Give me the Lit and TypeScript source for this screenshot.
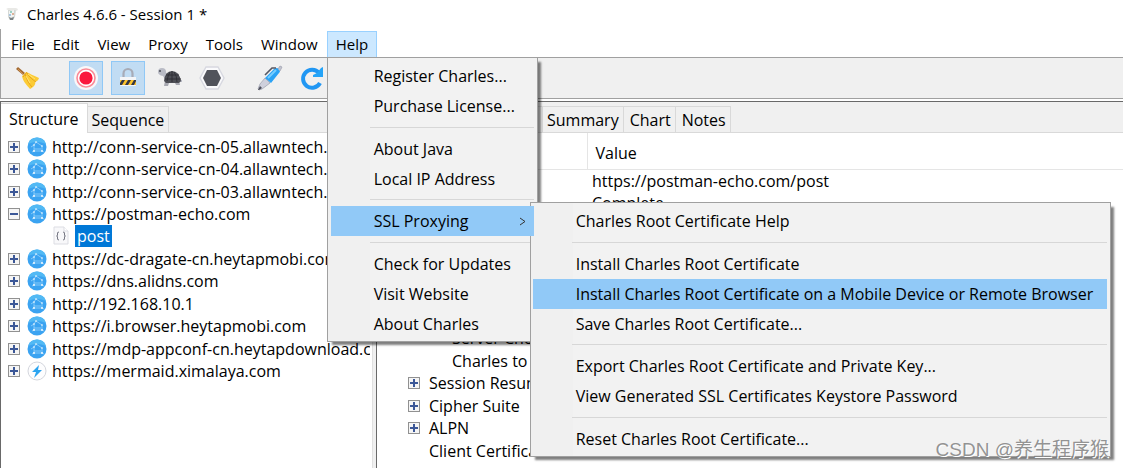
import { LitElement, html, css, svg, nothing } from "lit";
import { customElement, state } from "lit/decorators.js";
import { classMap } from "lit/directives/class-map.js";

type MenuEntry = { label: string; active?: boolean; submenu?: MenuGroup[] };
type MenuGroup = MenuEntry[];
type Host = { url: string; icon?: "globe" | "bolt"; open?: boolean; leaf?: string };
type Row = { name: string; value?: string; level?: number; toggle?: boolean };

const sslMenu: MenuGroup[] = [
  [{ label: "Charles Root Certificate Help" }],
  [
    { label: "Install Charles Root Certificate" },
    { label: "Install Charles Root Certificate on a Mobile Device or Remote Browser", active: true },
    { label: "Save Charles Root Certificate..." },
  ],
  [
    { label: "Export Charles Root Certificate and Private Key..." },
    { label: "View Generated SSL Certificates Keystore Password" },
  ],
  [{ label: "Reset Charles Root Certificate..." }],
];

const helpMenu: MenuGroup[] = [
  [{ label: "Register Charles..." }, { label: "Purchase License..." }],
  [{ label: "About Java" }, { label: "Local IP Address" }],
  [{ label: "SSL Proxying", active: true, submenu: sslMenu }],
  [{ label: "Check for Updates" }, { label: "Visit Website" }, { label: "About Charles" }],
];

const hosts: Host[] = [
  { url: "http://conn-service-cn-05.allawntech.com" },
  { url: "http://conn-service-cn-04.allawntech.com" },
  { url: "http://conn-service-cn-03.allawntech.com" },
  { url: "https://postman-echo.com", open: true, leaf: "post" },
  { url: "https://dc-dragate-cn.heytapmobi.com" },
  { url: "https://dns.alidns.com" },
  { url: "http://192.168.10.1" },
  { url: "https://i.browser.heytapmobi.com" },
  { url: "https://mdp-appconf-cn.heytapdownload.com" },
  { url: "https://mermaid.ximalaya.com", icon: "bolt" },
];

const rows: Row[] = [
  { name: "URL", value: "https://postman-echo.com/post" },
  { name: "Status", value: "Complete" },
  { name: "Response Code", value: "200" },
  { name: "Protocol", value: "HTTP/1.1" },
  { name: "TLS", toggle: true },
  { name: "Protocol", level: 1, toggle: true },
  { name: "Client Supported", level: 2 },
  { name: "Server Chosen", level: 2 },
  { name: "Charles to Client", level: 2 },
  { name: "Session Resumed", level: 1, toggle: true },
  { name: "Cipher Suite", level: 1, toggle: true },
  { name: "ALPN", level: 1, toggle: true },
  { name: "Client Certificates", level: 1 },
];

const appIcon = svg`<svg width="14" height="14" viewBox="0 0 14 14">
  <path d="M3 3h8l-1 7-2 3H5l-2-3z" fill="#d5d9d6"/><path d="M1 2l2-1h8l2 1-1 2-2-1H3z" fill="#e9e9e6"/>
  <path d="M4 4l5-1v6l-3 2-2-2z" fill="#f2f5f3"/><circle cx="6" cy="5" r="1" fill="#7fc4b4"/>
  <circle cx="8" cy="7" r="1" fill="#d59a7c"/><circle cx="5" cy="8" r="1" fill="#8fb4dc"/><path d="M4 10l2 1 3-1-1 3H5z" fill="#7c8386"/></svg>`;

const broom = svg`<svg width="26" height="26" viewBox="0 0 26 26">
  <path d="M1 4l2-2 7 6-2 2z" fill="#a36a32"/><path d="M3 4l5 5" stroke="#cf9250" stroke-width="1"/>
  <path d="M7 11c2-1 3-3 4-4 3 1 8 4 13 6-1 3-2 3-4 4 1 2-1 5-5 7-3-4-7-7-8-13z" fill="#fccb35"/>
  <path d="M10 9c2 6 4 10 7 13M12 8c2 4 6 7 9 9M8 12l4-5" stroke="#e7a51e" fill="none"/>
  <path d="M13 9l7 5M11 11l4 7" stroke="#ffe474" fill="none"/></svg>`;

const record = svg`<svg width="26" height="26" viewBox="0 0 26 26">
  <circle cx="13" cy="13" r="12" fill="#f8f8fa"/><circle cx="13" cy="13" r="9" fill="#fff" stroke="#fb8b98" stroke-width="1.6"/>
  <circle cx="13" cy="13" r="6.600" fill="#fa183d"/></svg>`;

const lock = svg`<svg width="26" height="26" viewBox="0 0 26 26">
  <path d="M8.500 13V8.500a4.500 4.500 0 0 1 9 0V13" fill="none" stroke="#a7abb7" stroke-width="2.200"/>
  <path d="M5 12h16v8q0 1-1 1H6q-1 0-1-1z" fill="#f4f5f7"/><path d="M5 15h16v5H5z" fill="#fdc42c"/>
  <path d="M5 18l2-3h3l-3 5H5zM10 20l3-5h3l-3 5zM16 20l3-5h2v1l-2 4z" fill="#343745"/></svg>`;

const turtle = svg`<svg width="26" height="22" viewBox="0 0 26 22">
  <path d="M1 5q0-4 4-4t4 4l2 7-2 2-3-5Q1 8 1 5z" fill="#b9bbc5"/><circle cx="3" cy="4" r="1" fill="#4b4c55"/>
  <path d="M8 14h14l1 4h-4l-1-2h-6l-1 3H7z" fill="#a6a7b0"/><path d="M22 13h3v2h-4z" fill="#b9bbc5"/>
  <path d="M7 14Q8 4 15 4t9 10l-2 2H9z" fill="#4e4f56"/>
  <path d="M10 14q1-6 3-9M15 4v11M17 5q3 4 3 10M9 8h13M8 12h16" stroke="#303137" fill="none"/></svg>`;

const hexagon = svg`<svg width="26" height="26" viewBox="0 0 26 26">
  <path d="M7 2h12l6 11-6 11H7L1 13z" fill="#fafafc" stroke="#d7d8e0" stroke-width="1.4"/>
  <path d="M8 5h10l4 8-4 8H8l-4-8z" fill="#51535b"/></svg>`;

const pen = svg`<svg width="26" height="26" viewBox="0 0 26 26">
  <path d="M8 13l5 5-8 6-3 1-1-1 2-5z" fill="#cfd0dc" stroke="#a2a4b2" stroke-width=".8"/>
  <path d="M1 25l2-4 2 2-3 2z" fill="#4c4d58"/><path d="M8 13L17 4q3-2 5 0t0 4L14 18z" fill="#2ba3f5"/>
  <path d="M11 13l8-8" stroke="#77ceff" stroke-width="2"/><path d="M8 10l7-7h4" fill="none" stroke="#555762" stroke-width="1.6"/>
  <path d="M21 4l2-3 2 1-2 4" fill="#c3c4cf" stroke="#a2a4b2" stroke-width=".8"/></svg>`;

const refresh = svg`<svg width="26" height="26" viewBox="0 0 26 26">
  <path d="M20 8A9 9 0 1 0 21 18" fill="none" stroke="#2197f3" stroke-width="4"/>
  <path d="M24 2v10H14v-2l4-2 4-5z" fill="#25a4f8"/></svg>`;

const globe = svg`<svg width="20" height="20" viewBox="0 0 20 20">
  <circle cx="10" cy="10" r="9.500" fill="#3ba3f1"/><path d="M1 7a9.500 9.500 0 0 1 18 0Q10 3 1 7z" fill="#52b9f4"/>
  <path d="M9 5L7 8v6h8V9L9 5M7 8l-3 2M7 14l-2 1M15 14l2 1M7 12h7" fill="none" stroke="#a5dafc" stroke-width=".7"/>
  <g fill="#fff"><circle cx="9" cy="5" r=".8"/><circle cx="7" cy="8" r=".8"/><circle cx="7" cy="14" r=".9"/><circle cx="15" cy="14" r=".9"/><circle cx="15" cy="9" r=".8"/></g></svg>`;

const bolt = svg`<svg width="20" height="20" viewBox="0 0 20 20">
  <circle cx="10" cy="10" r="9" fill="#fdfdfe" stroke="#d4d6dd"/><path d="M12 4l-7 7h4l-2 6 8-8h-4z" fill="#2ba4f0"/></svg>`;

const jsonFile = svg`<svg width="16" height="20" viewBox="0 0 16 20">
  <path d="M1 1h10l4 4v13H1z" fill="#f8f8fa" stroke="#dcdde3"/><path d="M11 1v4h4" fill="#fff" stroke="#dcdde3"/>
  <path d="M6 6q-2 0-1.500 2T3.500 10q1.500 0 1 2T6 14M10 6q2 0 1.500 2t1 2q-1.500 0-1 2T10 14" fill="none" stroke="#757783"/></svg>`;

const toggleIcon = (open: boolean) => svg`<svg width="12" height="12" viewBox="0 0 12 12">
  <rect x=".5" y=".5" width="11" height="11" fill="#f5f5f5" stroke="#919191"/>
  <path d=${open ? "M2 6h8" : "M2 6h8M6 2v8"} stroke="#3b5797" stroke-width="2"/></svg>`;

const resetStyles = css`
  * { box-sizing: border-box; }
  button { font: inherit; color: inherit; background: none; border: 0; padding: 0; margin: 0; text-align: left; white-space: nowrap; }
  ul { list-style: none; margin: 0; padding: 0; }
  svg { display: block; flex: none; }
`;

@customElement("popup-menu")
export class PopupMenu extends LitElement {
  static properties = { groups: { attribute: false } };
  declare groups: MenuGroup[];

  static styles = [resetStyles, css`
    :host {
      display: block;
      position: relative;
      padding: 3px 3px 2px;
      border: 1px solid #a0a0a0;
      background: linear-gradient(90deg, #f0f0f0 42px, #f2f2f2 42px);
      box-shadow: 4px 4px 2px -1px rgba(0, 0, 0, 0.5);
      color: #000;
      font-size: 16px;
    }
    .group + .group::before {
      content: "";
      display: block;
      height: 1px;
      margin: 6px 0 6px 39px;
      background: #d7d7d7;
    }
    .group:nth-child(3)::before { margin-top: 5px; }
    .entry { position: relative; }
    .item {
      display: flex;
      align-items: center;
      justify-content: space-between;
      position: relative;
      width: 100%;
      height: 30px;
      padding: 0 8px 0 43px;
    }
    .active { background: #91c9f7; }
    .parent { z-index: 2; }
    .submenu {
      position: absolute;
      z-index: 1;
      top: -4px;
      left: calc(100% - 4px);
      width: 581px;
      padding-left: 2px;
    }
  `];

  render() {
    return this.groups.map((group) => html`
      <ul class="group" role="group">
        ${group.map((entry) => html`
          <li class="entry">
            <button class=${classMap({ item: true, active: !!entry.active, parent: !!entry.submenu })} role="menuitem">
              <span>${entry.label}</span>
              ${entry.submenu ? svg`<svg width="7" height="9" viewBox="0 0 7 9"><path d="M1 1l5 3.500L1 8" fill="none" stroke="#333"/></svg>` : nothing}
            </button>
            ${entry.submenu ? html`<popup-menu class="submenu" role="menu" .groups=${entry.submenu}></popup-menu>` : nothing}
          </li>`)}
      </ul>`);
  }
}

@customElement("host-tree")
export class HostTree extends LitElement {
  static styles = [resetStyles, css`
    :host { display: block; padding: 2px 2px 0 7px; overflow: hidden; }
    .node { display: flex; align-items: center; height: 23px; white-space: nowrap; overflow: hidden; }
    .list > li:nth-child(even) > .node { height: 22px; }
    .toggle { margin-right: 7px; }
    .label { margin-left: 5px; }
    .leaf { padding-left: 45px; }
    .selected { margin-left: 6px; padding: 0 2px; background: #0078d7; color: #fff; }
  `];

  render() {
    return html`<ul class="list">
      ${hosts.map((host) => html`
        <li>
          <div class="node">
            <button class="toggle" aria-label="Toggle ${host.url}" aria-expanded=${!!host.open}>${toggleIcon(!!host.open)}</button>
            ${host.icon === "bolt" ? bolt : globe}
            <span class="label">${host.url}</span>
          </div>
          ${host.leaf ? html`<div class="node leaf">${jsonFile}<span class="selected">${host.leaf}</span></div>` : nothing}
        </li>`)}
    </ul>`;
  }
}

@customElement("overview-table")
export class OverviewTable extends LitElement {
  static styles = [resetStyles, css`
    :host { display: block; }
    .table { width: 100%; border-collapse: collapse; table-layout: fixed; }
    .name { width: 210px; }
    .head { height: 36px; padding: 4px 8px 0; border-bottom: 1px solid #e5e5e5; font-weight: 400; text-align: left; }
    .name.head { border-right: 1px solid #e5e5e5; }
    .row { height: 22px; }
    .row:nth-child(odd) { height: 23px; }
    .cell { padding: 0 5px; line-height: 22px; white-space: nowrap; overflow: hidden; }
    .content { display: flex; align-items: center; gap: 9px; }
    .level-0 { padding-left: 8px; }
    .level-1 { padding-left: 47px; }
    .level-1.branch { padding-left: 26px; }
    .level-2 { padding-left: 70px; }
  `];

  render() {
    return html`<table class="table">
      <thead><tr><th class="name head">Name</th><th class="head">Value</th></tr></thead>
      <tbody>
        ${rows.map((row) => html`<tr class="row">
          <td class="cell">
            <div class=${classMap({ content: true, branch: !!row.toggle, [`level-${row.level ?? 0}`]: true })}>
              ${row.toggle ? html`<button aria-label="Toggle ${row.name}">${toggleIcon(false)}</button>` : nothing}
              <span>${row.name}</span>
            </div>
          </td>
          <td class="cell">${row.value ?? nothing}</td>
        </tr>`)}
      </tbody>
    </table>`;
  }
}

@customElement("app-root")
export class AppRoot extends LitElement {
  @state() private openMenu = "Help";

  static styles = [resetStyles, css`
    :host {
      display: flex;
      flex-direction: column;
      position: relative;
      height: 100vh;
      overflow: hidden;
      background: #fff;
      color: #000;
      font: 16px/22px "Open Sans", "Noto Sans", "Noto Sans CJK SC", sans-serif;
    }
    .title { display: flex; align-items: center; gap: 8px; height: 29px; padding: 0 5px 1px; font-size: 15px; }
    .menubar { display: flex; height: 28px; padding: 2px 0 0 1px; border-left: 1px solid #a0a0a0; font-size: 15px; }
    .menu { position: relative; }
    .menu-button { height: 26px; padding: 0 8px 2px; border: 1px solid transparent; border-bottom: 0; }
    .open { background: #cce8ff; border-color: #99d1ff; }
    .dropdown { position: absolute; z-index: 10; top: 100%; left: 0; width: 211px; }
    .toolbar {
      display: flex;
      align-items: center;
      gap: 8px;
      height: 42px;
      padding-left: 10px;
      border: 1px solid #a0a0a0;
      border-right: 0;
      background: #f0f0f0;
    }
    .tool { display: grid; place-items: center; width: 34px; height: 34px; border: 1px solid transparent; }
    .on { background: #c1dcf3; border-color: #90c8f6; }
    .apart { margin-left: 16px; }
    .panes { display: flex; flex: 1; min-height: 0; margin-top: 2px; background: #f0f0f0; }
    .pane { display: flex; flex-direction: column; min-width: 0; border-top: 1px solid #696969; border-left: 1px solid #696969; }
    .left { flex: none; width: 373px; border-right: 1px solid #e0e0e0; }
    .right { flex: 1; margin-left: 3px; }
    .tabs { display: flex; align-items: flex-end; height: 31px; flex: none; border-bottom: 1px solid #d9d9d9; }
    .tab { height: 26px; padding: 0 4px; border: 1px solid #d9d9d9; border-left: 0; border-bottom: 0; }
    .wide { padding: 0 4px 0 6px; }
    .overview { width: 83px; }
    .current { height: 30px; margin-bottom: -1px; padding: 0 8px; background: #fff; }
    .page { flex: 1; background: #fff; overflow: hidden; }
    .watermark {
      position: absolute;
      z-index: 20;
      right: 14px;
      bottom: 4px;
      font: 19px/28px "Liberation Sans", "Noto Sans CJK SC", sans-serif;
      color: rgba(120, 120, 120, 0.8);
      text-shadow: 1px 1px 0 #fff;
    }
  `];

  render() {
    const menus = ["File", "Edit", "View", "Proxy", "Tools", "Window", "Help"];
    return html`
      <header class="title">${appIcon}<span>Charles 4.6.6 - Session 1 *</span></header>
      <nav class="menubar">
        ${menus.map((name) => html`
          <div class="menu">
            <button class=${classMap({ "menu-button": true, open: this.openMenu === name })}
              @click=${() => { this.openMenu = this.openMenu === name ? "" : name; }}>${name}</button>
            ${name === "Help" && this.openMenu === "Help"
              ? html`<popup-menu class="dropdown" role="menu" .groups=${helpMenu}></popup-menu>` : nothing}
          </div>`)}
      </nav>
      <div class="toolbar" role="toolbar">
        <button class="tool" aria-label="Clear session">${broom}</button>
        <button class="tool on apart" aria-label="Record">${record}</button>
        <button class="tool on" aria-label="SSL proxying">${lock}</button>
        <button class="tool" aria-label="Throttling">${turtle}</button>
        <button class="tool" aria-label="Breakpoints">${hexagon}</button>
        <button class="tool apart" aria-label="Compose">${pen}</button>
        <button class="tool" aria-label="Repeat">${refresh}</button>
      </div>
      <main class="panes">
        <section class="pane left">
          <div class="tabs" role="tablist">
            <button class="tab current" role="tab">Structure</button>
            <button class="tab" role="tab">Sequence</button>
          </div>
          <host-tree class="page"></host-tree>
        </section>
        <section class="pane right">
          <div class="tabs" role="tablist">
            <button class="tab current overview" role="tab">Overview</button>
            <button class="tab overview" role="tab">Contents</button>
            <button class="tab" role="tab">Summary</button>
            <button class="tab wide" role="tab">Chart</button>
            <button class="tab wide" role="tab">Notes</button>
          </div>
          <overview-table class="page"></overview-table>
        </section>
      </main>
      <div class="watermark">CSDN @养生程序猴</div>
    `;
  }
}
